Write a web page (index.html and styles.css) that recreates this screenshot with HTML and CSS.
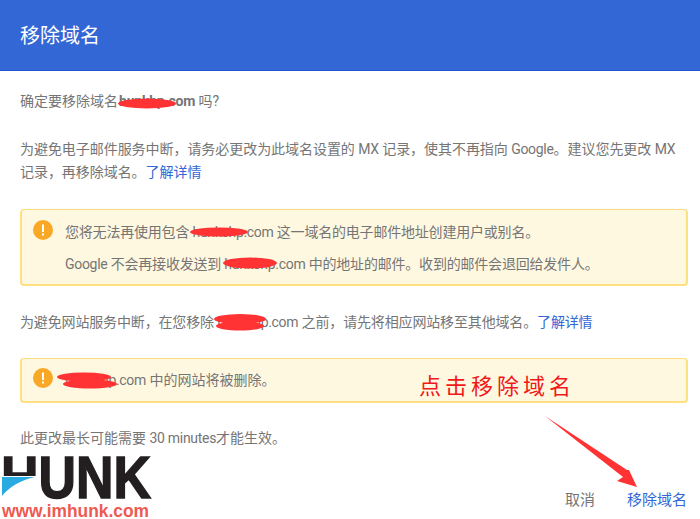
FILE: index.html
```html
<!DOCTYPE html>
<html lang="zh-CN">
<head>
<meta charset="utf-8">
<title>移除域名</title>
<link rel="stylesheet" href="styles.css">
</head>
<body>
<div class="dialog">
  <header class="head"><h1 class="title">移除域名</h1></header>
  <main class="content">
    <p class="line first">确定要移除域名<b class="domain">hunkhp.com</b> 吗?</p>
    <p class="line second">为避免电子邮件服务中断，请务必更改为此域名设置的 <span class="lat">MX</span> 记录，使其不再指向 <span class="lat">Google</span>。建议您先更改 <span class="lat">MX</span><br>记录，再移除域名。<a class="link" href="#">了解详情</a></p>
    <div class="notice tall">
      <svg class="icon" viewBox="0 0 20 20"><circle cx="10" cy="10" r="10" fill="#f9a825"/><rect x="9" y="4.5" width="2" height="7.5" fill="#fff"/><rect x="9" y="13.5" width="2" height="2" fill="#fff"/></svg>
      <div class="notice-text">
        <p class="nline">您将无法再使用包含 <span class="lat">hunkshp.com</span> 这一域名的电子邮件地址创建用户或别名。</p>
        <p class="nline"><span class="lat">Google</span> 不会再接收发送到 <span class="lat">hunkshp.com</span> 中的地址的邮件。收到的邮件会退回给发件人。</p>
      </div>
    </div>
    <p class="line third">为避免网站服务中断，在您移除 <span class="lat">hunkshp.com</span> 之前，请先将相应网站移至其他域名。<a class="link" href="#">了解详情</a></p>
    <div class="notice short">
      <svg class="icon" viewBox="0 0 20 20"><circle cx="10" cy="10" r="10" fill="#f9a825"/><rect x="9" y="4.5" width="2" height="7.5" fill="#fff"/><rect x="9" y="13.5" width="2" height="2" fill="#fff"/></svg>
      <div class="notice-text"><p class="nline"><span class="lat">hunkshp.com</span> 中的网站将被删除。</p></div>
    </div>
    <p class="line fourth">此更改最长可能需要 <span class="lat">30 minutes</span>才能生效。</p>
  </main>
  <footer class="actions">
    <a class="btn cancel" href="#">取消</a>
    <a class="btn confirm" href="#">移除域名</a>
  </footer>
</div>

<svg class="marks" viewBox="0 0 700 519" aria-hidden="true">
  <g fill="#ff3333">
    <ellipse cx="147" cy="103.500" rx="29" ry="5"/>
    <ellipse cx="219" cy="232" rx="29" ry="4.500"/>
    <ellipse cx="250" cy="263" rx="27" ry="5.500"/>
    <ellipse cx="240" cy="319" rx="26" ry="5"/>
    <ellipse cx="240" cy="326" rx="24" ry="4.500"/>
    <ellipse cx="84" cy="377" rx="27" ry="4.500"/>
    <ellipse cx="90" cy="384" rx="27" ry="4.500"/>
    <polygon points="545,416 627,470 629,470 637,487 617,481 623,477"/>
  </g>
</svg>

<div class="note">点击移除域名</div>

<svg class="logo" viewBox="0 0 152 64" aria-label="HUNK">
  <text class="logo-word" x="1" y="43" textLength="150" lengthAdjust="spacingAndGlyphs">HUNK</text>
  <rect x="0" y="21" width="36" height="24" fill="#fff"/>
  <path d="M2 22 H35 C21 25 9 32 2 41 Z" fill="#29abe2"/>
  <text class="logo-url" x="2" y="62" textLength="147" lengthAdjust="spacingAndGlyphs">www.imhunk.com</text>
</svg>
</body>
</html>
```
FILE: styles.css
```css
* { box-sizing: border-box; }
html, body { margin: 0; padding: 0; }
body {
  position: relative;
  width: 700px;
  height: 519px;
  overflow: hidden;
  background: #fff;
  color: #757575;
  font-family: Roboto, "Noto Sans CJK SC", sans-serif;
  font-size: 14px;
}
.dialog { display: flex; flex-direction: column; height: 519px; }
.head {
  height: 71px;
  flex: none;
  display: flex;
  align-items: center;
  padding: 1px 20px 0;
  background: #3367d6;
  border-bottom: 1px solid #1f55cf;
}
.title { margin: 0; font-size: 20px; font-weight: 400; color: #fff; line-height: 28px; }
.content { padding: 0 12px 0 20px; flex: 1; }
.line { margin: 0; line-height: 23px; }
.first { margin-top: 19px; }
.second { margin-top: 25px; letter-spacing: -0.05px; }
.third { margin-top: 25px; letter-spacing: -0.15px; }
.fourth { margin-top: 24px; }
.domain { font-weight: 700; margin-left: 1px; letter-spacing: -0.2px; }
.lat { letter-spacing: -0.3px; }
.link { color: #3367d6; text-decoration: none; }
.notice {
  display: flex;
  gap: 12px;
  padding: 10px 0 0 11px;
  background: #fff8e1;
  border: 1px solid #ffdf80;
  border-width: 1px 2px 2px 2px;
  border-radius: 4px;
}
.tall { height: 77px; margin-top: 25px; letter-spacing: -0.2px; }
.tall .notice-text { padding-top: 1px; }
.short { height: 45px; margin-top: 24px; }
.short .icon { margin-top: -1px; }
.icon { width: 20px; height: 20px; flex: none; }
.notice-text { flex: 1; }
.nline { margin: 0; line-height: 23px; }
.nline + .nline { margin-top: 9px; }
.actions {
  flex: none;
  display: flex;
  justify-content: flex-end;
  gap: 32px;
  padding: 0 13px 8px 0;
}
.btn { font-size: 15px; line-height: 22px; text-decoration: none; }
.cancel { color: #757575; }
.confirm { color: #3367d6; }
.marks { position: absolute; left: 0; top: 0; width: 700px; height: 519px; }
.note {
  position: absolute;
  left: 419px;
  top: 369px;
  color: #f01818;
  font-family: "Noto Sans CJK SC", sans-serif;
  font-size: 22px;
  font-weight: 400;
  line-height: 30px;
  letter-spacing: 4px;
  white-space: nowrap;
}
.logo { position: absolute; left: 0; top: 455px; width: 152px; height: 64px; }
.logo-word { font-family: "Liberation Sans", sans-serif; font-weight: 700; font-size: 60px; fill: #231f20; stroke: #231f20; stroke-width: 1.5px; }
.logo-url { font-family: "Liberation Sans", sans-serif; font-weight: 700; font-size: 18px; fill: #ef5a50; }
```
